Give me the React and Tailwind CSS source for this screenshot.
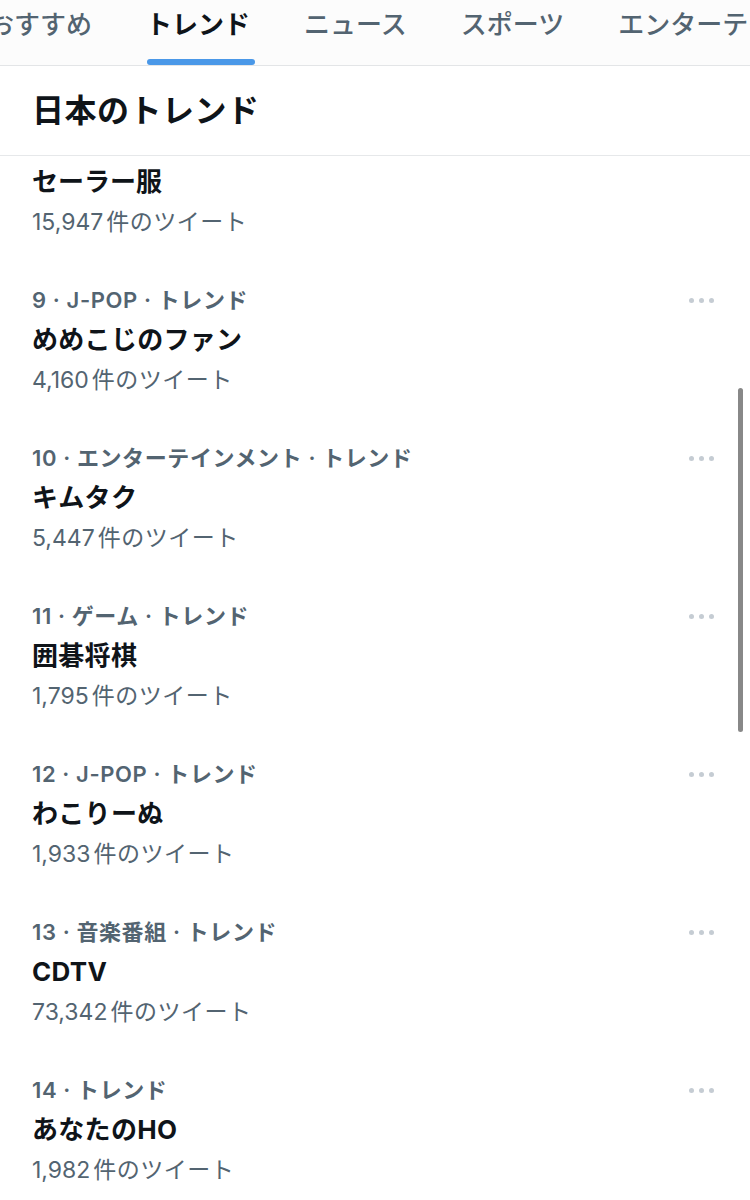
import React from "react";

const tabs = ["おすすめ", "トレンド", "ニュース", "スポーツ", "エンターテインメント"];

const trends = [
  { meta: "9 · J-POP · トレンド", title: "めめこじのファン", count: "4,160" },
  { meta: "10 · エンターテインメント · トレンド", title: "キムタク", count: "5,447" },
  { meta: "11 · ゲーム · トレンド", title: "囲碁将棋", count: "1,795" },
  { meta: "12 · J-POP · トレンド", title: "わこりーぬ", count: "1,933" },
  { meta: "13 · 音楽番組 · トレンド", title: "CDTV", count: "73,342" },
  { meta: "14 · トレンド", title: "あなたのHO", count: "1,982" },
];

const MoreDots = () => (
  <div className="flex items-center gap-[5px] pr-[36px]">
    <span className="w-[5px] h-[5px] rounded-full bg-[#c5ccd3]" />
    <span className="w-[5px] h-[5px] rounded-full bg-[#c5ccd3]" />
    <span className="w-[5px] h-[5px] rounded-full bg-[#c5ccd3]" />
  </div>
);

const TweetCount = ({ count }) => (
  <p className="h-[40px] leading-[40px] text-[23px] text-[#536471]">
    {count}
    <span className="ml-[3px] tracking-[0.5px]">件のツイート</span>
  </p>
);

const App = () => {
  return (
    <div
      className="relative w-[750px] h-[1200px] overflow-hidden bg-white text-[#0f1419]"
      style={{ fontFamily: 'Inter, "Noto Sans CJK JP", sans-serif' }}
    >
      {/* tabs */}
      <div className="h-[66px] bg-[#fcfcfc] border-b border-[#e3e5e7] overflow-hidden">
        <div className="flex gap-[54px] ml-[-12px] whitespace-nowrap">
          {tabs.map((tab, i) => (
            <div key={tab} className="relative h-[65px] flex flex-col">
              <span
                className={
                  "h-[50px] leading-[50px] text-[26px] " +
                  (i === 1 ? "font-bold text-[#0f1419]" : "font-medium text-[#536471]")
                }
              >
                {tab}
              </span>
              {i === 1 && (
                <div className="absolute bottom-0 left-[1px] right-[-5px] h-[6px] rounded-full bg-[#4a98e8]" />
              )}
            </div>
          ))}
        </div>
      </div>

      {/* heading */}
      <div className="h-[90px] border-b border-[#e6e8ea] flex items-center pl-[32px]">
        <h2 className="text-[32px] font-bold tracking-[0.5px]">日本のトレンド</h2>
      </div>

      {/* first, partly scrolled item */}
      <div className="pl-[32px] pt-[6px] pb-[19px]">
        <p className="h-[40px] leading-[40px] text-[26px] font-bold">セーラー服</p>
        <TweetCount count="15,947" />
      </div>

      {trends.map((t) => (
        <div key={t.title} className="pl-[32px] py-[19px]">
          <div className="h-[40px] flex items-center justify-between">
            <p className="text-[22px] font-semibold tracking-[0.6px] text-[#536471]">{t.meta}</p>
            <MoreDots />
          </div>
          <p className="h-[40px] leading-[40px] text-[26px] font-bold tracking-[0.3px]">{t.title}</p>
          <TweetCount count={t.count} />
        </div>
      ))}

      {/* scroll indicator */}
      <div className="absolute left-[738px] top-[388px] w-[5px] h-[344px] rounded-full bg-[#888888]" />
    </div>
  );
};

export default App;
